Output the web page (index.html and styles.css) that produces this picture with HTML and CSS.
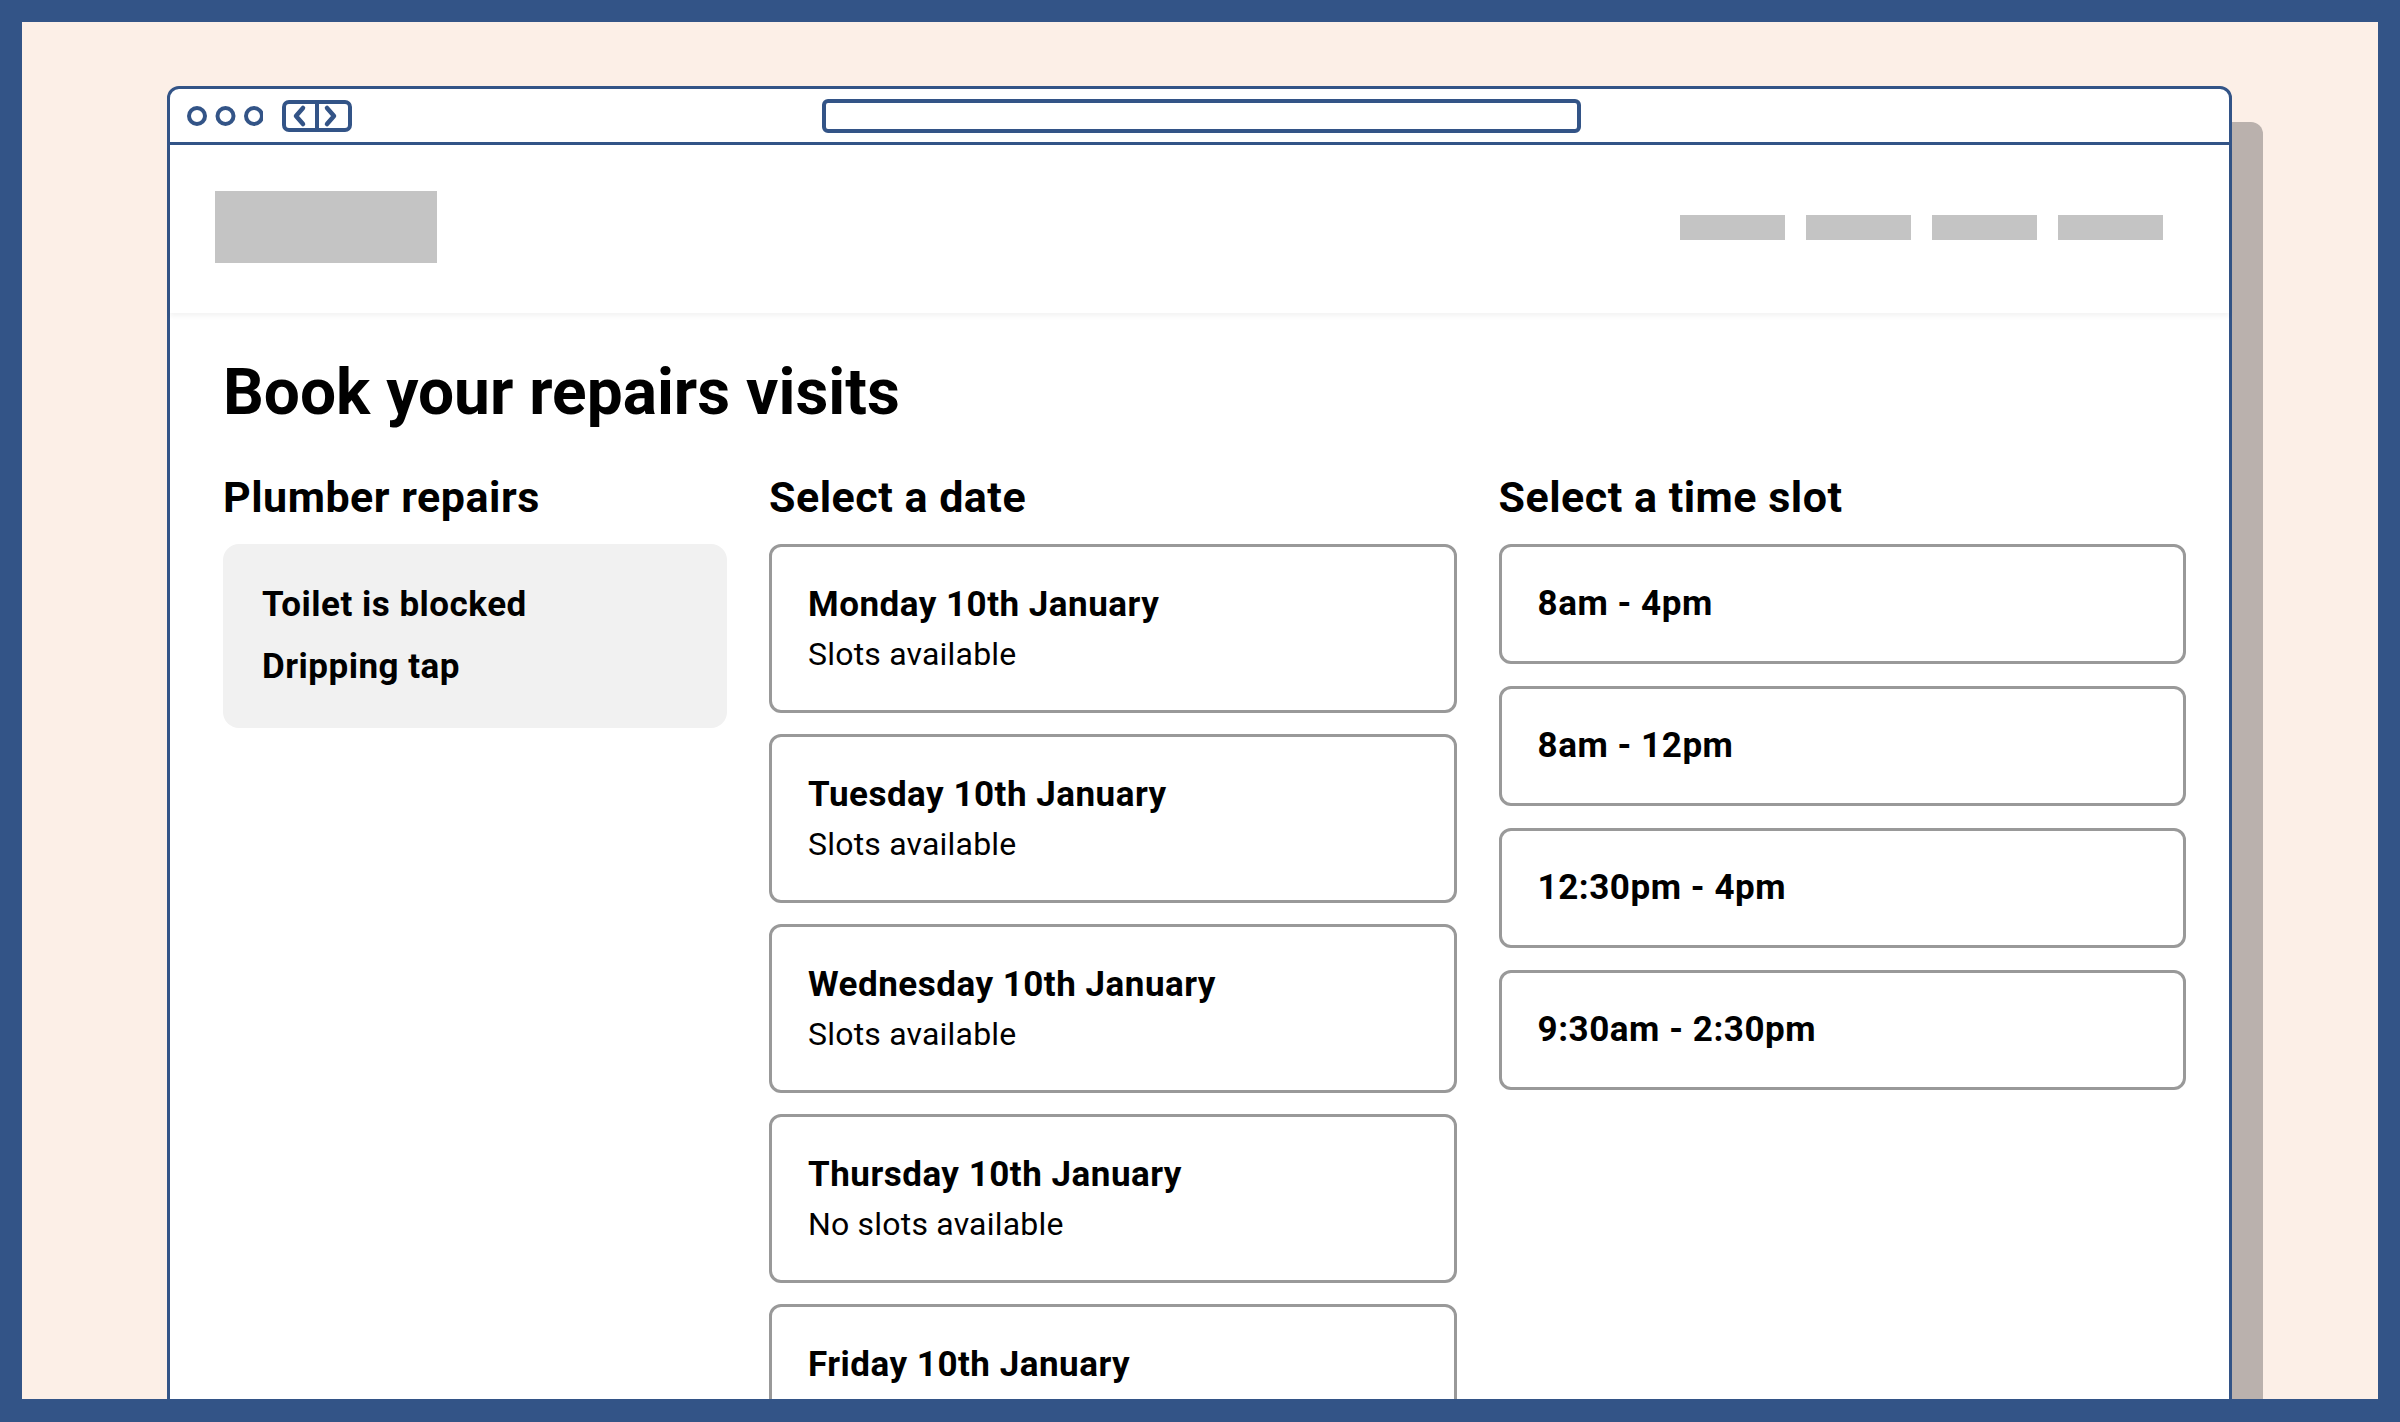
FILE: index.html
```html
<!DOCTYPE html>
<html lang="en">
<head>
  <meta charset="UTF-8">
  <meta name="viewport" content="width=device-width, initial-scale=1.0">
  <link rel="stylesheet" href="styles.css">
  <title>Book your repairs visits</title>
</head>
<body>
  <div class="frame">
    <div class="window">
      <div class="chrome">
        <div class="chrome-left">
          <svg class="dots" width="76" height="24" viewBox="0 0 76 24">
            <circle cx="10" cy="12" r="8" />
            <circle cx="38.5" cy="12" r="8" />
            <circle cx="67" cy="12" r="8" />
          </svg>
          <div class="history">
            <svg width="70" height="32" viewBox="0 0 70 32">
              <rect x="2" y="2" width="66" height="28" rx="5" />
              <line x1="35" y1="2" x2="35" y2="30" />
              <polyline points="21,8 14,16 21,24" />
              <polyline points="45,8 52,16 45,24" />
            </svg>
          </div>
        </div>
        <div class="address-bar"></div>
        <div class="chrome-right"></div>
      </div>

      <header class="site-header">
        <div class="logo"></div>
        <nav class="nav">
          <span class="nav-item"></span>
          <span class="nav-item"></span>
          <span class="nav-item"></span>
          <span class="nav-item"></span>
        </nav>
      </header>

      <main class="content">
        <h1>Book your repairs visits</h1>
        <div class="columns">
          <section class="column">
            <h2>Plumber repairs</h2>
            <div class="repairs">
              <p>Toilet is blocked</p>
              <p>Dripping tap</p>
            </div>
          </section>

          <section class="column">
            <h2>Select a date</h2>
            <div class="card-list">
              <div class="date-card">
                <p class="card-title">Monday 10th January</p>
                <p class="card-sub">Slots available</p>
              </div>
              <div class="date-card">
                <p class="card-title">Tuesday 10th January</p>
                <p class="card-sub">Slots available</p>
              </div>
              <div class="date-card">
                <p class="card-title">Wednesday 10th January</p>
                <p class="card-sub">Slots available</p>
              </div>
              <div class="date-card">
                <p class="card-title">Thursday 10th January</p>
                <p class="card-sub">No slots available</p>
              </div>
              <div class="date-card">
                <p class="card-title">Friday 10th January</p>
                <p class="card-sub">Slots available</p>
              </div>
            </div>
          </section>

          <section class="column">
            <h2>Select a time slot</h2>
            <div class="card-list">
              <div class="slot-card">8am - 4pm</div>
              <div class="slot-card">8am - 12pm</div>
              <div class="slot-card">12:30pm - 4pm</div>
              <div class="slot-card">9:30am - 2:30pm</div>
            </div>
          </section>
        </div>
      </main>
    </div>
  </div>
</body>
</html>
```

FILE: styles.css
```css
body {
  margin: 0;
  font-family: Roboto, "Liberation Sans", sans-serif;
  color: #000;
}

.frame {
  box-sizing: border-box;
  width: 2400px;
  height: 1422px;
  padding: 64px 146px 0 145px;
  border: 22px solid #335487;
  border-bottom-width: 23px;
  background-color: #fcefe7;
  overflow: hidden;
}

.window {
  height: 1500px;
  border: 3px solid #335487;
  border-radius: 12px 12px 0 0;
  background-color: #fff;
  box-shadow: 31px 36px 0 #bab1ad;
}

/* browser toolbar */
.chrome {
  display: grid;
  grid-template-columns: 652px 759px 1fr;
  align-items: center;
  height: 53px;
  border-bottom: 3px solid #335487;
}

.chrome-left {
  display: flex;
  align-items: center;
  gap: 19px;
  padding-left: 17px;
}

.dots circle,
.history rect,
.history line,
.history polyline {
  fill: none;
  stroke: #335487;
  stroke-width: 4;
  stroke-linecap: round;
  stroke-linejoin: round;
}

.history polyline {
  stroke-width: 4.5;
}

.history svg {
  display: block;
}

.address-bar {
  box-sizing: border-box;
  height: 34px;
  border: 4px solid #335487;
  border-radius: 6px;
}

/* site header */
.site-header {
  box-sizing: border-box;
  display: flex;
  align-items: center;
  justify-content: space-between;
  height: 168px;
  padding: 0 66px 4px 45px;
  box-shadow: 0 3px 5px rgba(0, 0, 0, 0.05);
}

.logo {
  width: 222px;
  height: 72px;
  background-color: #c4c4c4;
}

.nav {
  display: flex;
  gap: 21px;
}

.nav-item {
  width: 105px;
  height: 25px;
  background-color: #c4c4c4;
}

/* booking content */
.content {
  padding: 42px 43px 0 53px;
}

h1 {
  margin: 0 0 40px;
  font-size: 64px;
  font-weight: 700;
  line-height: 1.2;
}

.columns {
  display: grid;
  grid-template-columns: 504px 1fr 1fr;
  gap: 42px;
}

h2 {
  margin: 0 0 21px;
  font-size: 43px;
  font-weight: 700;
  line-height: 1.2;
  letter-spacing: 0.5px;
}

p {
  margin: 0;
}

.repairs {
  padding: 30px 39px;
  border-radius: 16px;
  background-color: #f1f1f1;
  font-size: 35px;
  font-weight: 700;
  line-height: 62px;
  letter-spacing: 0.5px;
}

.card-list {
  display: flex;
  flex-direction: column;
}

.date-card {
  box-sizing: border-box;
  height: 169px;
  margin-bottom: 21px;
  padding: 37px 36px 0;
  border: 3px solid #999;
  border-radius: 12px;
}

.card-title {
  font-size: 35px;
  font-weight: 700;
  line-height: 1.2;
  letter-spacing: 0.5px;
}

.card-sub {
  margin-top: 9px;
  font-size: 32px;
  line-height: 1.2;
  letter-spacing: 0.2px;
}

.slot-card {
  box-sizing: border-box;
  display: flex;
  align-items: center;
  height: 120px;
  margin-bottom: 22px;
  padding: 0 36px;
  border: 3px solid #999;
  border-radius: 12px;
  font-size: 35px;
  font-weight: 700;
  line-height: 1.2;
  letter-spacing: 0.55px;
}
```
